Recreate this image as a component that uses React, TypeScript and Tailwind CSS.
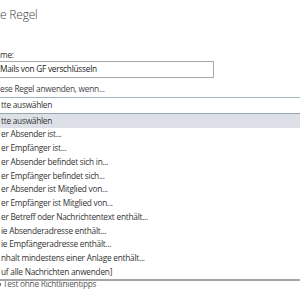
import React from "react";

// Outlook web rule editor, cropped at the left edge
const options = [
  "er Absender ist...",
  "er Empfänger ist...",
  "er Absender befindet sich in...",
  "er Empfänger befindet sich...",
  "er Absender ist Mitglied von...",
  "er Empfänger ist Mitglied von...",
  "er Betreff oder Nachrichtentext enthält...",
  "ie Absenderadresse enthält...",
  "ie Empfängeradresse enthält...",
  "nhalt mindestens einer Anlage enthält...",
  "uf alle Nachrichten anwenden]",
];

export default function App() {
  return (
    <div className="relative h-[300px] w-[300px] overflow-hidden bg-white font-['Open_Sans',sans-serif] text-[#333]">
      <div className="pt-[5px] text-[12px] font-light leading-[20px] tracking-[-0.2px] text-[#444]">e Regel</div>

      <div className="mt-[24px] text-[8.3px] leading-[12px] tracking-[-0.25px]">me:</div>
      <div className="flex h-[17px] w-[214px] items-center border-y border-r border-[#a9a9a9] text-[8.3px] tracking-[-0.25px] text-[#222]">
        Mails von GF verschlüsseln
      </div>

      <div className="mt-[5px] text-[8.3px] leading-[12px] tracking-[-0.25px] text-[#444]">ese Regel anwenden, wenn...</div>

      <div className="relative mt-[2px]">
        <div className="flex h-[16px] items-center border-t border-[#a3b5ba] pl-[1px] text-[8.3px] tracking-[-0.25px]">tte auswählen</div>
        <div className="absolute left-0 right-0 top-full z-10 border-t border-b-2 border-t-[#94a6ae] border-b-[#a5a5a5] bg-white text-[8.3px] tracking-[-0.25px]">
          <div className="flex h-[13.75px] items-center bg-[#dde1e7] pl-[1px]">tte auswählen</div>
          {options.map((o) => (
            <div key={o} className="flex h-[13.75px] items-center pl-[1px]">
              {o}
            </div>
          ))}
        </div>
      </div>

      <div className="mt-[165px] flex items-center gap-[2px] text-[8.3px] leading-[12px] tracking-[-0.25px] text-[#555]">
        <span className="h-[3px] w-[1px] bg-[#777]" />
        Test ohne Richtlinientipps
      </div>
    </div>
  );
}
